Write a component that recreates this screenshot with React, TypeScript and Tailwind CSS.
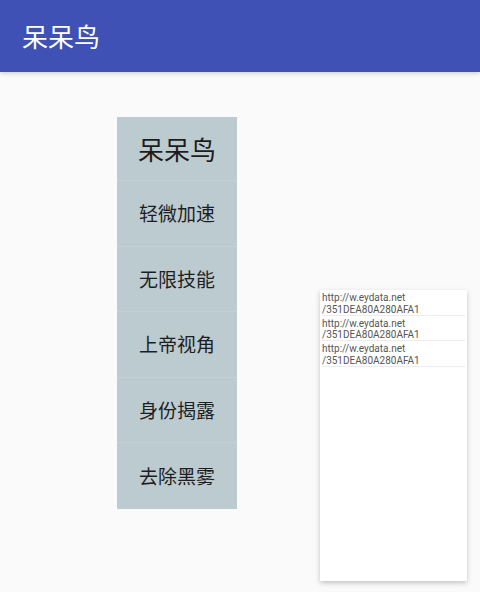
const cjk = { fontFamily: '"Noto Sans CJK SC", "Noto Sans", sans-serif' };

const menuItems = ["轻微加速", "无限技能", "上帝视角", "身份揭露", "去除黑雾"];

const links = [
  "http://w.eydata.net\n/351DEA80A280AFA1",
  "http://w.eydata.net\n/351DEA80A280AFA1",
  "http://w.eydata.net\n/351DEA80A280AFA1",
];

export default function App() {
  return (
    <div className="relative h-[592px] w-[480px] overflow-hidden bg-[#fafafa]">
      {/* app bar */}
      <div className="flex h-[72px] items-center bg-[#3f51b5] px-[22px] shadow-[0_2px_4px_rgba(0,0,0,0.15)]">
        <span className="text-[26px] leading-none text-white" style={cjk}>
          呆呆鸟
        </span>
      </div>

      <div className="flex items-start">
        {/* side menu */}
        <div className="ml-[117px] mt-[45px] flex w-[120px] flex-col bg-[#bccbd0]" style={cjk}>
          <div className="flex h-[64px] items-center justify-center border-b border-[#c3d0d4] text-[26px] text-[#1c1c1c]">
            呆呆鸟
          </div>
          {menuItems.map((item, i) => (
            <div
              key={item}
              className={
                i < menuItems.length - 1
                  ? "flex h-[65.5px] items-center justify-center border-b border-[#c3d0d4] text-[19px] text-[#1e1e1e]"
                  : "flex h-[65.5px] items-center justify-center text-[19px] text-[#1e1e1e]"
              }
            >
              {item}
            </div>
          ))}
        </div>

        {/* link list */}
        <div className="ml-[83px] mt-[218px] flex h-[291px] w-[147px] flex-col bg-white px-[2px] shadow-[0_2px_5px_rgba(0,0,0,0.22)]">
          {links.map((l, i) => (
            <div
              key={i}
              className="h-[25.5px] whitespace-pre border-b border-[#ececec] pt-[2px] text-[10px] leading-[11.5px] text-[#555]"
              style={{ fontFamily: 'Roboto, "Liberation Sans", sans-serif' }}
            >
              {l}
            </div>
          ))}
        </div>
      </div>
    </div>
  );
}
